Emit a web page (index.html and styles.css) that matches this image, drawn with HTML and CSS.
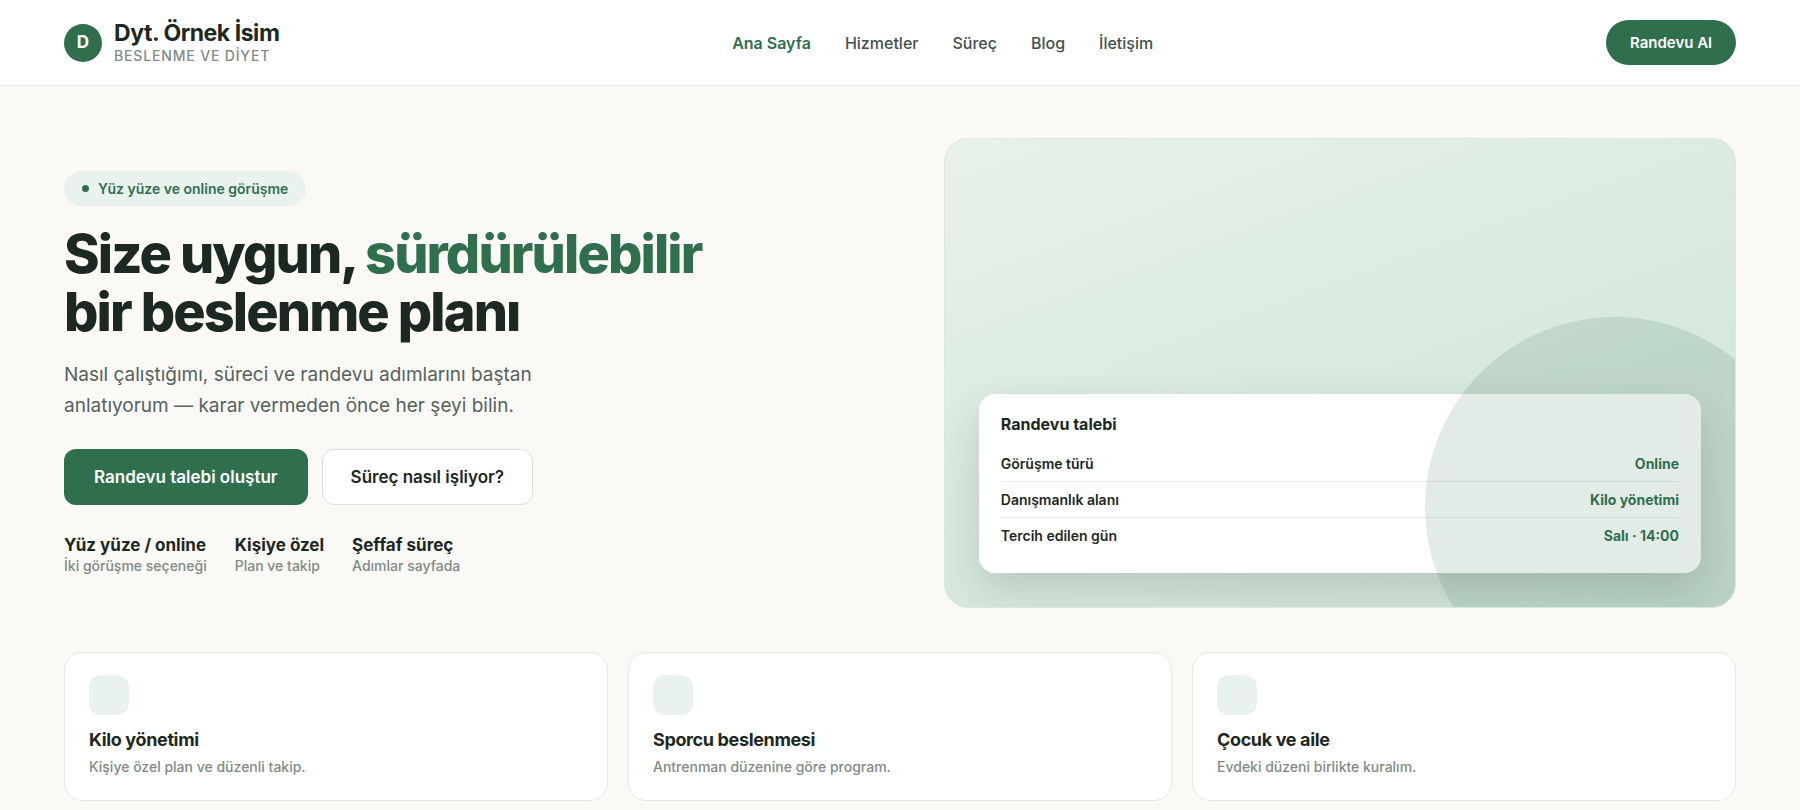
FILE: index.html
```html
<!DOCTYPE html>
<html lang="tr">

<head>
    <meta charset="UTF-8">
    <meta name="viewport" content="width=device-width, initial-scale=1">
    <title>Dyt. Örnek İsim</title>

    <link rel="stylesheet" href="styles.css">
</head>

<body>

    <header class="header">
        <a class="logo" href="#">
            <span class="logo-mark">D</span>
            <span class="logo-text">
                <strong>Dyt. Örnek İsim</strong>
                <small>BESLENME VE DİYET</small>
            </span>
        </a>

        <nav class="menu">
            <a class="active" href="#">Ana Sayfa</a>
            <a href="#hizmetler">Hizmetler</a>
            <a href="#surec">Süreç</a>
            <a href="#blog">Blog</a>
            <a href="#iletisim">İletişim</a>
        </nav>

        <button class="btn-header" type="button">Randevu Al</button>
    </header>

    <main>
        <section class="hero">
            <div class="hero-text">
                <span class="badge">Yüz yüze ve online görüşme</span>
                <h1>Size uygun, <em>sürdürülebilir</em><br>bir beslenme planı</h1>
                <p class="lead">Nasıl çalıştığımı, süreci ve randevu adımlarını baştan anlatıyorum — karar vermeden önce her şeyi bilin.</p>

                <div class="actions">
                    <button class="btn btn-primary" type="button">Randevu talebi oluştur</button>
                    <button class="btn btn-outline" type="button">Süreç nasıl işliyor?</button>
                </div>

                <ul class="facts">
                    <li><strong>Yüz yüze / online</strong><span>İki görüşme seçeneği</span></li>
                    <li><strong>Kişiye özel</strong><span>Plan ve takip</span></li>
                    <li><strong>Şeffaf süreç</strong><span>Adımlar sayfada</span></li>
                </ul>
            </div>

            <div class="visual">
                <div class="request">
                    <h2>Randevu talebi</h2>
                    <dl>
                        <div class="row">
                            <dt>Görüşme türü</dt>
                            <dd>Online</dd>
                        </div>
                        <div class="row">
                            <dt>Danışmanlık alanı</dt>
                            <dd>Kilo yönetimi</dd>
                        </div>
                        <div class="row">
                            <dt>Tercih edilen gün</dt>
                            <dd>Salı · 14:00</dd>
                        </div>
                    </dl>
                </div>
            </div>
        </section>

        <section class="cards" id="hizmetler">
            <article class="card">
                <div class="card-icon"></div>
                <h3>Kilo yönetimi</h3>
                <p>Kişiye özel plan ve düzenli takip.</p>
            </article>
            <article class="card">
                <div class="card-icon"></div>
                <h3>Sporcu beslenmesi</h3>
                <p>Antrenman düzenine göre program.</p>
            </article>
            <article class="card">
                <div class="card-icon"></div>
                <h3>Çocuk ve aile</h3>
                <p>Evdeki düzeni birlikte kuralım.</p>
            </article>
        </section>
    </main>

</body>

</html>
```

FILE: styles.css
```css
:root {
    --green: #2f6f4e;
    --green-soft: #e9f2ed;
    --ink: #1c2822;
    --text: #55635c;
    --muted: #7f8b85;
    --line: #e8e8e2;
    --bg: #faf9f5;
}

* {
    box-sizing: border-box;
    margin: 0;
    padding: 0;
}

body {
    font-family: Inter, "Liberation Sans", sans-serif;
    background-color: var(--bg);
    color: var(--ink);
    line-height: 1.5;
}

a {
    color: inherit;
    text-decoration: none;
}

button {
    font-family: inherit;
    cursor: pointer;
}

/* header */
.header {
    display: flex;
    align-items: center;
    justify-content: space-between;
    padding: 20px 64px;
    background-color: white;
    border-bottom: 1px solid var(--line);
}

.logo {
    display: flex;
    align-items: center;
    gap: 12px;
}

.logo-mark {
    display: grid;
    place-items: center;
    width: 38px;
    height: 38px;
    border-radius: 50%;
    background-color: var(--green);
    color: white;
    font-size: 17px;
    font-weight: 700;
}

.logo-text {
    display: flex;
    flex-direction: column;
}

.logo-text strong {
    font-size: 23px;
    line-height: 27px;
    font-weight: 700;
    letter-spacing: -0.02em;
}

.logo-text small {
    font-size: 14px;
    line-height: 18px;
    font-weight: 500;
    letter-spacing: 0.06em;
    color: var(--muted);
}

.menu {
    display: flex;
    gap: 34px;
    font-size: 16px;
    font-weight: 500;
    color: #44514b;
}

.menu .active {
    color: var(--green);
    font-weight: 600;
}

.btn-header {
    padding: 0 24px;
    border: none;
    border-radius: 999px;
    background-color: var(--green);
    color: white;
    font-size: 15px;
    line-height: 45px;
    font-weight: 600;
}

/* hero */
.hero {
    display: grid;
    grid-template-columns: 1.05fr 1fr;
    gap: 48px;
    align-items: center;
    padding: 52px 64px 44px;
}

.badge {
    display: inline-flex;
    align-items: center;
    gap: 9px;
    padding: 7px 18px;
    border-radius: 999px;
    background-color: var(--green-soft);
    color: var(--green);
    font-size: 14px;
    line-height: 21px;
    font-weight: 600;
}

.badge::before {
    content: "";
    width: 7px;
    height: 7px;
    border-radius: 50%;
    background-color: var(--green);
}

h1 {
    margin-top: 19px;
    font-size: 54px;
    line-height: 58px;
    font-weight: 800;
    letter-spacing: -0.035em;
}

h1 em {
    font-style: normal;
    color: var(--green);
}

.lead {
    max-width: 500px;
    margin-top: 18px;
    font-size: 19px;
    line-height: 31px;
    color: var(--text);
}

.actions {
    display: flex;
    gap: 14px;
    margin-top: 28px;
}

.btn {
    padding: 0 30px;
    height: 56px;
    border: none;
    border-radius: 12px;
    font-size: 17px;
    font-weight: 600;
}

.btn-primary {
    background-color: var(--green);
    color: white;
}

.btn-outline {
    padding: 0 28px;
    border: 1px solid #dcdedb;
    background-color: white;
    color: var(--ink);
}

.facts {
    display: flex;
    gap: 28px;
    margin-top: 28px;
    list-style: none;
}

.facts strong {
    display: block;
    font-size: 17px;
    line-height: 24px;
    font-weight: 700;
}

.facts span {
    display: block;
    font-size: 14px;
    line-height: 18px;
    font-weight: 500;
    color: var(--muted);
}

.visual {
    position: relative;
    display: flex;
    align-items: flex-end;
    min-height: 470px;
    padding: 34px;
    border: 1px solid #dce7df;
    border-radius: 24px;
    background: linear-gradient(160deg, #e8f1ea, #d7e8de 60%, #cfe2d7);
    overflow: hidden;
}

/* see-through circle, lies over the request card */
.visual::after {
    content: "";
    position: absolute;
    right: -70px;
    bottom: -90px;
    width: 380px;
    height: 380px;
    border-radius: 50%;
    background-color: var(--green);
    opacity: 0.14;
    pointer-events: none;
}

.request {
    flex: 1;
    padding: 18px 22px 20px;
    border-radius: 16px;
    background-color: white;
    box-shadow: 0 16px 40px rgba(28, 40, 34, 0.16);
}

.request h2 {
    margin-bottom: 10px;
    font-size: 16px;
    line-height: 24px;
    font-weight: 700;
}

.row {
    display: flex;
    justify-content: space-between;
    padding: 7px 0;
    font-size: 14px;
    line-height: 21px;
    font-weight: 600;
    border-bottom: 1px solid #ebedeb;
}

.row:last-child {
    border-bottom: none;
}

.row dd {
    color: var(--green);
    font-weight: 700;
}

/* service cards */
.cards {
    display: grid;
    grid-template-columns: repeat(3, 1fr);
    gap: 20px;
    padding: 0 64px;
}

.card {
    padding: 22px 24px;
    border: 1px solid var(--line);
    border-radius: 18px;
    background-color: white;
}

.card-icon {
    width: 40px;
    height: 40px;
    border-radius: 12px;
    background-color: var(--green-soft);
}

.card h3 {
    margin-top: 12px;
    font-size: 18px;
    line-height: 26px;
    font-weight: 700;
    letter-spacing: -0.02em;
}

.card p {
    margin-top: 3px;
    font-size: 14px;
    line-height: 22px;
    font-weight: 500;
    color: var(--muted);
}

@media only screen and (max-width: 900px) {

    .header {
        flex-wrap: wrap;
        gap: 20px;
    }

    .hero,
    .cards {
        grid-template-columns: 1fr;
    }

}
```
